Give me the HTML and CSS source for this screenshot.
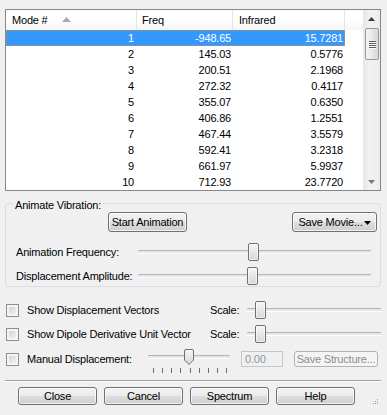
FILE: index.html
```html
<!DOCTYPE html>
<html lang="en">
<head>
    <meta charset="UTF-8">
    <title>Vibrations</title>
    <link rel="stylesheet" href="styles.css">
</head>
<body>
<div class="dialog">
    <div class="list">
        <div class="list-main">
            <div class="list-head">
                <div class="head-cell">Mode #
                    <svg class="sort-arrow" width="9" height="5" viewBox="0 0 9 5"><polygon points="0,5 4.5,0 9,5" fill="#a9a9a9"/></svg>
                </div>
                <div class="head-cell">Freq</div>
                <div class="head-cell">Infrared</div>
                <div class="head-cell head-fill"></div>
            </div>
            <div class="list-row selected"><span>1</span><span>-948.65</span><span>15.7281</span></div>
            <div class="list-row"><span>2</span><span>145.03</span><span>0.5776</span></div>
            <div class="list-row"><span>3</span><span>200.51</span><span>2.1968</span></div>
            <div class="list-row"><span>4</span><span>272.32</span><span>0.4117</span></div>
            <div class="list-row"><span>5</span><span>355.07</span><span>0.6350</span></div>
            <div class="list-row"><span>6</span><span>406.86</span><span>1.2551</span></div>
            <div class="list-row"><span>7</span><span>467.44</span><span>3.5579</span></div>
            <div class="list-row"><span>8</span><span>592.41</span><span>3.2318</span></div>
            <div class="list-row"><span>9</span><span>661.97</span><span>5.9937</span></div>
            <div class="list-row"><span>10</span><span>712.93</span><span>23.7720</span></div>
        </div>
        <div class="scrollbar">
            <div class="scroll-btn">
                <svg width="7" height="4" viewBox="0 0 7 4"><polygon points="0,4 3.5,0 7,4" fill="#3c3c3c"/></svg>
            </div>
            <div class="scroll-track">
                <div class="scroll-thumb">
                    <span class="grip"></span><span class="grip"></span><span class="grip"></span><span class="grip"></span>
                </div>
            </div>
            <div class="scroll-btn">
                <svg width="7" height="4" viewBox="0 0 7 4"><polygon points="0,0 7,0 3.5,4" fill="#7a7a7a"/></svg>
            </div>
        </div>
    </div>

    <div class="group">
        <span class="group-title">Animate Vibration:</span>
        <div class="anim-buttons">
            <button class="btn btn-start">Start Animation</button>
            <button class="btn btn-movie">Save Movie...
                <svg width="7" height="4" viewBox="0 0 7 4"><polygon points="0,0 7,0 3.5,4" fill="#000"/></svg>
            </button>
        </div>
        <div class="slider-row">
            <span class="slider-label">Animation Frequency:</span>
            <div class="slider slider-wide">
                <div class="track"></div>
                <div class="thumb" style="left: 110px"></div>
            </div>
        </div>
        <div class="slider-row">
            <span class="slider-label">Displacement Amplitude:</span>
            <div class="slider slider-wide">
                <div class="track"></div>
                <div class="thumb" style="left: 109px"></div>
            </div>
        </div>
    </div>

    <div class="check-row">
        <span class="check"></span>
        <span class="check-label">Show Displacement Vectors</span>
        <span class="scale-label">Scale:</span>
        <div class="slider slider-scale">
            <div class="track"></div>
            <div class="thumb" style="left: 8px"></div>
        </div>
    </div>
    <div class="check-row">
        <span class="check"></span>
        <span class="check-label">Show Dipole Derivative Unit Vector</span>
        <span class="scale-label">Scale:</span>
        <div class="slider slider-scale">
            <div class="track"></div>
            <div class="thumb" style="left: 8px"></div>
        </div>
    </div>
    <div class="check-row manual-row">
        <span class="check"></span>
        <span class="manual-label">Manual Displacement:</span>
        <div class="slider slider-manual">
            <div class="track"></div>
            <svg class="thumb-pointer" style="left: 39px" width="10" height="16" viewBox="0 0 10 16">
                <defs>
                    <linearGradient id="tg" x1="0" y1="0" x2="0" y2="1">
                        <stop offset="0" stop-color="#f6f6f6"/>
                        <stop offset="1" stop-color="#d8d8d8"/>
                    </linearGradient>
                </defs>
                <path d="M0.5 2 Q0.5 0.5 2 0.5 H8 Q9.5 0.5 9.5 2 V11 L5 15.5 L0.5 11 Z" fill="url(#tg)" stroke="#707070"/>
            </svg>
            <div class="ticks">
                <span></span><span></span><span></span><span></span><span></span><span></span><span></span><span></span><span></span>
            </div>
        </div>
        <span class="value-box">0.00</span>
        <button class="btn btn-disabled">Save Structure...</button>
    </div>

    <div class="separator"></div>

    <div class="dialog-buttons">
        <button class="btn btn-bottom">Close</button>
        <button class="btn btn-bottom">Cancel</button>
        <button class="btn btn-bottom">Spectrum</button>
        <button class="btn btn-bottom">Help</button>
        <svg class="size-grip" width="7" height="7" viewBox="0 0 7 7">
            <rect x="5" y="1" width="1" height="1" fill="#a0a0a0"/>
            <rect x="3" y="3" width="1" height="1" fill="#a0a0a0"/>
            <rect x="5" y="3" width="1" height="1" fill="#a0a0a0"/>
            <rect x="1" y="5" width="1" height="1" fill="#a0a0a0"/>
            <rect x="3" y="5" width="1" height="1" fill="#a0a0a0"/>
            <rect x="5" y="5" width="1" height="1" fill="#a0a0a0"/>
        </svg>
    </div>
</div>
</body>
</html>
```

FILE: styles.css
```css
body {
    margin: 0;
    background: #f0f0f0;
    font-family: "Liberation Sans", Arial, sans-serif;
    font-size: 11px;
    letter-spacing: -0.2px;
    color: #000;
}
.dialog {
    width: 387px;
    height: 415px;
    box-sizing: border-box;
    padding: 9px 6px 0 5px;
    overflow: hidden;
}

/* list view */
.list {
    display: flex;
    height: 182px;
    border: 1px solid #828790;
    background: #fff;
    box-sizing: border-box;
}
.list-main {
    flex: 1;
}
.list-head {
    display: grid;
    grid-template-columns: 131px 96px 112px 1fr;
    height: 20px;
    background: linear-gradient(#ffffff 0%, #ffffff 45%, #f4f5f6 100%);
}
.head-cell {
    display: flex;
    align-items: center;
    padding-left: 6px;
    border-right: 1px solid #e3e5e8;
    box-sizing: border-box;
    white-space: nowrap;
}
.head-cell:nth-child(2) {
    padding-left: 5px;
}
.head-fill {
    border-right: none;
}
.sort-arrow {
    margin-left: 14px;
    margin-top: -2px;
}
.list-row {
    display: grid;
    grid-template-columns: 131px 96px 112px;
    width: 339px;
    height: 16px;
    line-height: 16px;
    text-align: right;
    box-sizing: border-box;
}
.list-row span {
    padding-right: 2px;
}
.list-row span:first-child {
    padding-right: 3px;
}
.list-row.selected {
    background: #3399ff;
    color: #fff;
    outline: 1px dotted #d9883a;
    outline-offset: -1px;
}

/* scrollbar */
.scrollbar {
    width: 17px;
    display: flex;
    flex-direction: column;
    background: linear-gradient(to right, #e6e6e6, #f2f2f2 40%, #ececec);
}
.scroll-btn {
    height: 17px;
    display: flex;
    align-items: center;
    justify-content: center;
}
.scroll-track {
    flex: 1;
    padding: 1px 1px 0 2px;
}
.scroll-thumb {
    height: 32px;
    box-sizing: border-box;
    border: 1px solid #979797;
    border-radius: 2px;
    background: linear-gradient(to right, #f4f4f4, #e8e8e8 50%, #d6d6d6);
    display: flex;
    flex-direction: column;
    align-items: center;
    justify-content: center;
    gap: 1px;
}
.grip {
    width: 7px;
    height: 1px;
    background: #5e5e5e;
    box-shadow: 0 1px 0 #fafafa;
}

/* group box */
.group {
    position: relative;
    margin-top: 12px;
    height: 84px;
    box-sizing: border-box;
    border: 1px solid #d5dfe5;
    border-radius: 3px;
    padding: 8px 3px 0 10px;
}
.group-title {
    position: absolute;
    top: -5px;
    left: 7px;
    padding: 0 2px;
    background: #f0f0f0;
    line-height: 13px;
}
.anim-buttons {
    display: flex;
    height: 20px;
}
.btn {
    font-family: inherit;
    font-size: 11px;
    letter-spacing: -0.2px;
    color: #000;
    border: 1px solid #707070;
    border-radius: 3px;
    background: linear-gradient(#f2f2f2 0%, #ebebeb 48%, #dddddd 52%, #cfcfcf 100%);
    box-shadow: inset 0 0 0 1px rgba(255, 255, 255, 0.7);
    padding: 0;
    margin: 0;
    box-sizing: border-box;
}
.btn-start {
    width: 79px;
    margin-left: 92px;
}
.btn-movie {
    width: 85px;
    margin-left: auto;
    display: flex;
    align-items: center;
    justify-content: center;
    gap: 1px;
}
.btn-movie svg {
    margin-top: 1px;
}
.slider-row {
    display: flex;
    align-items: center;
    height: 20px;
    margin-top: 4px;
}
.anim-buttons + .slider-row {
    margin-top: 10px;
}
.slider-label {
    width: 122px;
}

/* track bars */
.slider {
    position: relative;
    height: 20px;
}
.slider-wide {
    width: 233px;
}
.track {
    position: absolute;
    left: 0;
    right: 0;
    top: 8px;
    height: 2px;
    background: #e7e7e7;
    border-top: 1px solid #b4b4b4;
    border-bottom: 1px solid #fdfdfd;
    border-radius: 1px;
}
.thumb {
    position: absolute;
    top: 1px;
    width: 11px;
    height: 18px;
    box-sizing: border-box;
    border: 1px solid #707070;
    border-radius: 2px;
    background: linear-gradient(#f6f6f6, #e6e6e6 50%, #d6d6d6);
    box-shadow: inset 0 0 0 1px rgba(255, 255, 255, 0.6);
}

/* check rows */
.check-row {
    display: flex;
    align-items: center;
    height: 20px;
    margin-top: 4px;
}
.group + .check-row {
    margin-top: 13px;
}
.manual-row {
    margin-top: 5px;
}
.check {
    position: relative;
    width: 13px;
    height: 13px;
    box-sizing: border-box;
    margin-left: 1px;
    border: 1px solid #8e8f8f;
    background: #f4f4f4;
}
.check::after {
    content: "";
    position: absolute;
    left: 2px;
    top: 2px;
    width: 7px;
    height: 7px;
    background: linear-gradient(135deg, #cfd2d6, #f3f3f3);
}
.check-label {
    margin-left: 8px;
    width: 183px;
    white-space: nowrap;
}
.scale-label {
    width: 37px;
}
.slider-scale {
    flex: 1;
}
.manual-label {
    margin-left: 8px;
    width: 118px;
    white-space: nowrap;
}
.slider-manual {
    width: 89px;
}
.slider-manual .track {
    left: 3px;
    right: 4px;
    top: 6px;
}
.thumb-pointer {
    position: absolute;
    top: 0;
}
.ticks {
    position: absolute;
    left: 8px;
    top: 19px;
    width: 74px;
    height: 5px;
    display: flex;
    justify-content: space-between;
}
.ticks span {
    width: 1px;
    background: #6e6e6e;
}
.value-box {
    margin-left: 7px;
    width: 42px;
    height: 16px;
    box-sizing: border-box;
    border: 1px solid #c3c6ca;
    padding-left: 3px;
    line-height: 14px;
    color: #8a96a2;
}
.btn-disabled {
    margin-left: 11px;
    width: 84px;
    height: 16px;
    border-color: #adb2b5;
    background: #f4f4f4;
    box-shadow: none;
    color: #8d8d8d;
}

.separator {
    margin-top: 11px;
    border-top: 1px solid #a0a0a0;
    border-bottom: 1px solid #ffffff;
}
.dialog-buttons {
    display: flex;
    gap: 7px;
    margin-top: 5px;
    height: 18px;
    padding-left: 13px;
}
.btn-bottom {
    width: 79px;
    height: 18px;
}
.size-grip {
    margin-left: auto;
    margin-right: 2px;
    align-self: flex-end;
}
```
